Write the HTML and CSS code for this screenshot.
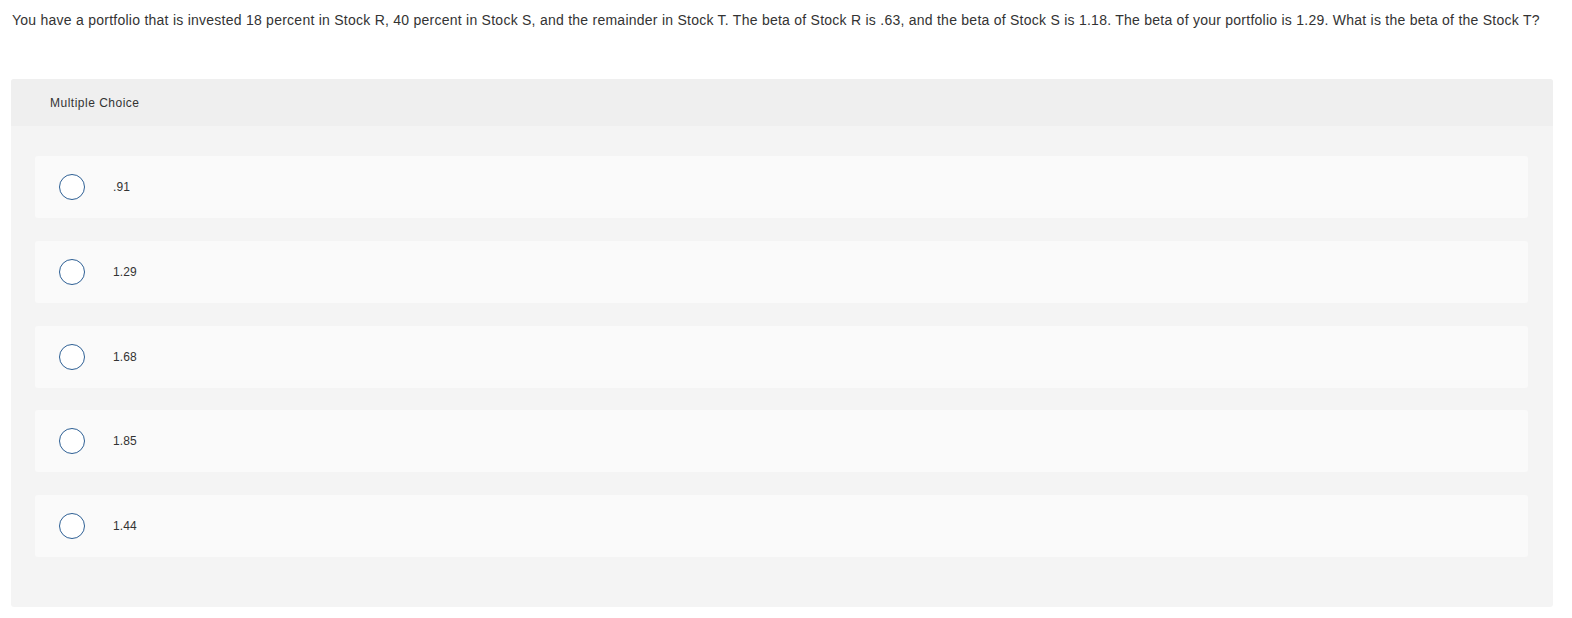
FILE: index.html
```html
<!DOCTYPE html>
<html>
<head>
<meta charset="utf-8">
<link rel="stylesheet" href="styles.css">
</head>
<body>
<p class="question">You have a portfolio that is invested 18 percent in Stock R, 40 percent in Stock S, and the remainder in Stock T. The beta of Stock R is .63, and the beta of Stock S is 1.18. The beta of your portfolio is 1.29. What is the beta of the Stock T?</p>
<div class="mc">
  <div class="mc-head">Multiple Choice</div>
  <div class="mc-body">
    <label class="opt"><span class="radio"></span><span class="val">.91</span></label>
    <label class="opt"><span class="radio"></span><span class="val">1.29</span></label>
    <label class="opt"><span class="radio"></span><span class="val">1.68</span></label>
    <label class="opt"><span class="radio"></span><span class="val">1.85</span></label>
    <label class="opt"><span class="radio"></span><span class="val">1.44</span></label>
  </div>
</div>
</body>
</html>
```
FILE: styles.css
```css
html, body { margin: 0; padding: 0; background: #fff; }
body { font-family: "Liberation Sans", Arial, sans-serif; color: #333; }
.question { margin: 0; padding: 11px 12px 0 12px; font-size: 14px; line-height: 18px; letter-spacing: 0.25px; color: #333; white-space: nowrap; }
.mc { margin: 50px 19px 0 11px; border-radius: 3px; overflow: hidden; background: #f4f4f4; }
.mc-head { height: 47px; display: flex; align-items: center; padding-left: 39px; background: #efefef; font-size: 12px; letter-spacing: 0.5px; color: #333; }
.mc-body { display: flex; flex-direction: column; gap: 22.75px; padding: 30px 25px 50px 24px; }
.opt { display: flex; align-items: center; height: 62px; padding-left: 24px; background: #fafafa; border-radius: 3px; }
.radio { box-sizing: border-box; width: 26px; height: 26px; border-radius: 50%; border: 1.5px solid #2d5f94; background: #fff; flex: none; }
.val { margin-left: 28px; font-size: 12px; letter-spacing: 0.1px; color: #333; }
```
